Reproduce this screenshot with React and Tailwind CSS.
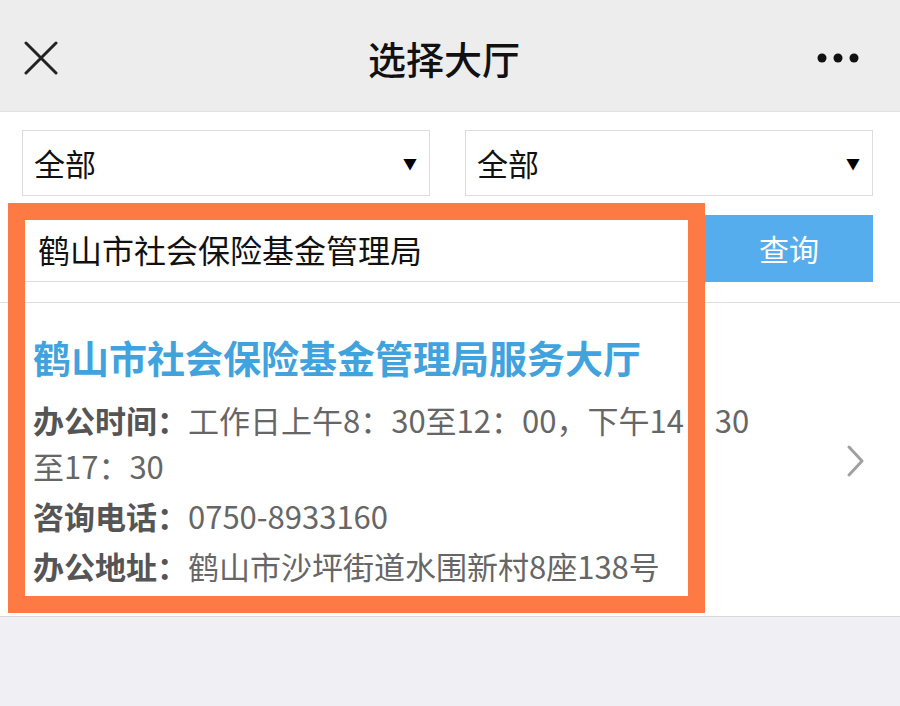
import React from 'react';

const font = { fontFamily: '"Noto Sans CJK SC", "Noto Sans", sans-serif' };

function Select() {
  return (
    <div className="flex-1 h-[66px] border border-[#dcdcdc] bg-white flex items-center justify-between pl-[11px] pr-[12px]">
      <span className="text-[31px] text-[#111]">全部</span>
      <span className="text-[14px] text-black leading-none">▼</span>
    </div>
  );
}

function Row({ label, children }) {
  return (
    <div className="text-[31px] leading-[46px] text-[#666]">
      <span className="font-bold text-[#555]">{label}</span>
      {children}
    </div>
  );
}

export default function App() {
  return (
    <div className="relative w-[900px] h-[706px] bg-[#efeff4] overflow-hidden" style={font}>
      {/* Header */}
      <header className="h-[112px] bg-[#ededed] flex items-center justify-between px-[24px] border-b border-[#e2e2e2]">
        <svg width="34" height="34" viewBox="0 0 34 34" className="mt-[4px]">
          <path d="M2 2 L32 32 M32 2 L2 32" stroke="#222" strokeWidth="3" strokeLinecap="round" />
        </svg>
        <h1 className="text-[38px] font-medium text-[#111] ml-[14px] mt-[4px]">选择大厅</h1>
        <svg width="44" height="12" viewBox="0 0 44 12" className="mr-[16px] mt-[4px]">
          <circle cx="6" cy="6" r="4.5" fill="#111" />
          <circle cx="22" cy="6" r="4.5" fill="#111" />
          <circle cx="38" cy="6" r="4.5" fill="#111" />
        </svg>
      </header>

      {/* Filters */}
      <section className="bg-white pt-[18px] pl-[22px] pr-[27px] pb-[20px] border-b border-[#dedede]">
        <div className="flex gap-[35px]">
          <Select />
          <Select />
        </div>
        <div className="flex mt-[19px] h-[67px]">
          <div className="flex-1 border border-[#dcdcdc] flex items-center px-[15px]">
            <span className="text-[32px] text-[#111]">鹤山市社会保险基金管理局</span>
          </div>
          <button className="w-[168px] bg-[#55adee] text-white text-[30px]">查询</button>
        </div>
      </section>

      {/* Result item */}
      <div className="bg-white flex items-center border-b border-[#d9d9d9] pl-[33px] pr-[34px] pt-[30px] pb-[27px]">
        <div className="flex-1">
          <div className="text-[38px] leading-[48px] font-bold text-[#41a3de] mb-[16px]">鹤山市社会保险基金管理局服务大厅</div>
          <Row label="办公时间：">
            工作日上午8：30至12：00，下午14：30
            <br />
            至17：30
          </Row>
          <div className="mt-[4px]">
            <Row label="咨询电话：">0750-8933160</Row>
          </div>
          <div className="mt-[4px]">
            <Row label="办公地址：">鹤山市沙坪街道水围新村8座138号</Row>
          </div>
        </div>
        <svg width="20" height="34" viewBox="0 0 20 34" className="shrink-0">
          <path d="M3 3 L16 17 L3 31" stroke="#a0a0a0" strokeWidth="3" fill="none" strokeLinecap="round" strokeLinejoin="round" />
        </svg>
      </div>

      {/* Orange highlight overlay */}
      <div className="absolute left-[8px] top-[203px] w-[697px] h-[410px] border-[17px] border-[#fd7a44] pointer-events-none" />
    </div>
  );
}
